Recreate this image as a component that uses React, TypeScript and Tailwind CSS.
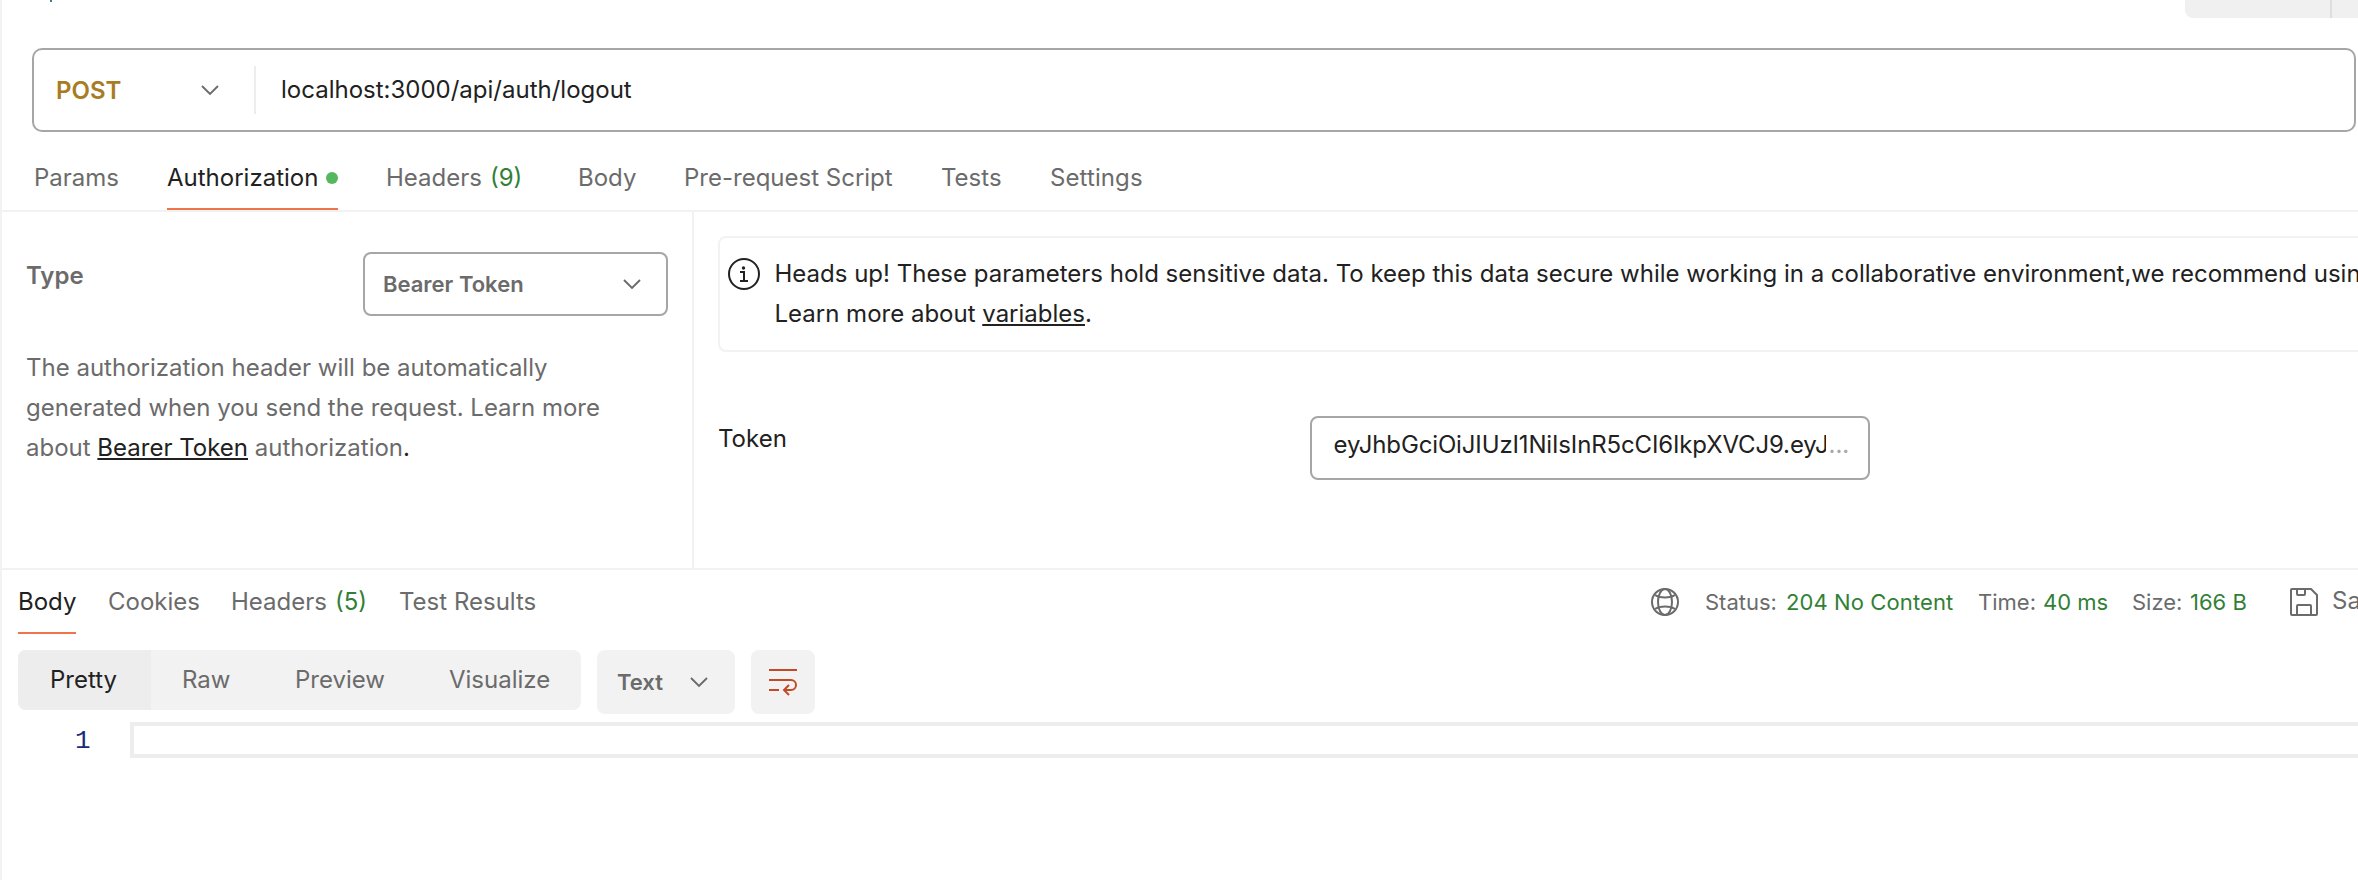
import React from "react";

function Chevron() {
  return (
    <svg width="18" height="12" viewBox="0 0 18 12" fill="none" stroke="#6b6b6b" strokeWidth="1.9" className="shrink-0">
      <path d="M1 2l8 8 8-8" />
    </svg>
  );
}

function InfoIcon() {
  return (
    <svg width="32" height="32" viewBox="0 0 32 32" fill="none" stroke="#212121" strokeWidth="2" className="shrink-0">
      <circle cx="16" cy="16" r="15" />
      <path d="M12 14h4v9M12 23h8" />
      <circle cx="15.5" cy="10" r="1.7" fill="#212121" stroke="none" />
    </svg>
  );
}

function GlobeIcon() {
  return (
    <svg width="28" height="28" viewBox="0 0 28 28" fill="none" stroke="#6b6b6b" strokeWidth="2" className="shrink-0">
      <circle cx="14" cy="14" r="13" />
      <ellipse cx="14" cy="14" rx="7" ry="13" />
      <path d="M4 7c5 3.4 15 3.4 20 0M4 21c5-3.4 15-3.4 20 0" />
    </svg>
  );
}

function SaveIcon() {
  return (
    <svg width="28" height="28" viewBox="0 0 28 28" fill="none" stroke="#6b6b6b" strokeWidth="2" strokeLinejoin="round" className="shrink-0">
      <path d="M2 1h19l6 6v19a1 1 0 0 1-1 1H2a1 1 0 0 1-1-1V2a1 1 0 0 1 1-1z" />
      <path d="M7 1v5a1 1 0 0 0 1 1h6a1 1 0 0 0 1-1V1M7 27v-9a1 1 0 0 1 1-1h12a1 1 0 0 1 1 1v9" />
    </svg>
  );
}

function WrapIcon() {
  return (
    <svg width="28" height="28" viewBox="0 0 28 28" fill="none" stroke="#c34a26" strokeWidth="2">
      <path d="M0 2h28M0 12h22a5 5 0 0 1 0 10h-7M0 22h10M20 17l-5 5 5 5" />
    </svg>
  );
}

function RequestTabs() {
  return (
    <nav className="flex h-20 shrink-0 gap-12 border-b-2 border-[#f2f2f2] pl-8 text-[#6b6b6b]">
      <span className="w-[85px] pt-[26px]">Params</span>
      <span className="flex h-[78px] w-[171px] items-start border-b-2 border-[#f0744a] pt-[26px] text-[#212121]">
        Authorization
        <i className="mt-3.5 ml-auto size-3 shrink-0 rounded-full bg-[#55b85e]" />
      </span>
      <span className="flex w-[144px] pt-[26px]">
        Headers <b className="ml-2 font-normal text-[#327f36]">(9)</b>
      </span>
      <span className="w-[58px] pt-[26px]">Body</span>
      <span className="w-[209px] pt-[26px]">Pre-request Script</span>
      <span className="w-[61px] pt-[26px]">Tests</span>
      <span className="pt-[26px] tracking-[0.1px]">Settings</span>
    </nav>
  );
}

function AuthPanel() {
  return (
    <section className="w-[692px] shrink-0 border-r-2 border-[#f2f2f2] pl-6 text-[#6b6b6b]">
      <div className="flex pt-10">
        <span className="w-[337px] pt-[4px] font-semibold">Type</span>
        <div className="flex h-16 w-[305px] items-center justify-between rounded-lg border-2 border-[#a6a6a6] pr-[25px] pl-[18px] text-[22px] font-semibold">
          Bearer Token
          <Chevron />
        </div>
      </div>
      <p className="mt-8 whitespace-pre">
        The authorization header will be automatically{"\n"}generated when you send the request. Learn more{"\n"}about{" "}
        <a className="text-[#212121] underline decoration-2 underline-offset-2">Bearer Token</a> authorization
        <span className="text-[#212121]">.</span>
      </p>
    </section>
  );
}

function TokenPanel() {
  return (
    <section className="flex-1 overflow-hidden pl-6">
      <div className="mt-6 flex h-[116px] w-[1700px] rounded-lg border-2 border-[#f2f2f2] pt-4 pl-2">
        <div className="pt-1">
          <InfoIcon />
        </div>
        <p className="ml-[14.5px] whitespace-pre">
          Heads up! These parameters hold sensitive data. To keep this data secure while working in a collaborative environment,we recommend using
          {"\n"}Learn more about <a className="underline decoration-2 underline-offset-2">variables</a>.
        </p>
      </div>
      <div className="mt-16 flex">
        <span className="w-[592px] pt-[3px]">Token</span>
        <div className="flex h-16 w-[560px] rounded-lg border-2 border-[#a6a6a6] pt-[7px] pl-[21.5px]">
          <span className="w-[492px] overflow-hidden tracking-[-0.14px] whitespace-nowrap">eyJhbGciOiJIUzI1NiIsInR5cCI6IkpXVCJ9.eyJ1c2Vy</span>
          <span className="ml-[3px] text-[#a6a6a6]">...</span>
        </div>
      </div>
    </section>
  );
}

function ResponseHeader() {
  return (
    <div className="flex h-16 shrink-0 pl-4 text-[#6b6b6b]">
      <span className="w-[58px] border-b-2 border-[#f0744a] pt-3 text-[#212121]">Body</span>
      <span className="ml-8 w-[91px] pt-3">Cookies</span>
      <span className="ml-8 flex w-[136px] pt-3">
        Headers <b className="ml-2 font-normal text-[#327f36]">(5)</b>
      </span>
      <span className="ml-8 pt-3">Test Results</span>
      <div className="ml-auto flex w-[707px] items-start overflow-hidden pt-3 text-[22px] whitespace-nowrap">
        <div className="w-[54px] shrink-0 pt-1.5">
          <GlobeIcon />
        </div>
        <span className="w-[81px] shrink-0">Status:</span>
        <span className="w-[192px] shrink-0 tracking-[0.1px] text-[#327f36]">204 No Content</span>
        <span className="w-[65px] shrink-0">Time:</span>
        <span className="w-[89px] shrink-0 text-[#327f36]">40 ms</span>
        <span className="w-[58px] shrink-0">Size:</span>
        <span className="w-[100px] shrink-0 text-[#327f36]">166 B</span>
        <div className="w-[42px] shrink-0 pt-1.5">
          <SaveIcon />
        </div>
        <span className="-mt-px text-2xl leading-10">Save Response</span>
      </div>
    </div>
  );
}

function ViewToolbar() {
  return (
    <div className="mt-4 flex h-16 shrink-0 items-start pl-4 text-[#6b6b6b]">
      <div className="flex h-[60px] w-[563px] overflow-hidden rounded-lg bg-[#f2f2f2] leading-[60px]">
        <span className="w-[133px] bg-[#ededed] pl-8 text-[#212121]">Pretty</span>
        <span className="w-[111px] pl-[31px]">Raw</span>
        <span className="w-[155px] pl-[33px]">Preview</span>
        <span className="pl-8">Visualize</span>
      </div>
      <div className="ml-4 flex h-16 w-[138px] items-center justify-between rounded-lg bg-[#f2f2f2] pr-[27px] pl-5 text-[22px] font-semibold">
        Text
        <Chevron />
      </div>
      <div className="ml-4 flex size-16 items-center justify-center rounded-lg bg-[#f2f2f2]">
        <WrapIcon />
      </div>
    </div>
  );
}

export default function App() {
  return (
    <div className="flex h-[880px] w-full flex-col overflow-hidden border-l-2 border-[#f2f2f2] bg-white font-['Inter',sans-serif] text-2xl leading-10 text-[#212121]">
      <div className="flex h-12 shrink-0 items-start justify-between pl-12">
        <i className="h-[2px] w-[2px] bg-[#3b7f86]" />
        <div className="flex h-[18px] w-[173px] rounded-bl-lg bg-[#f0f0f0]">
          <div className="ml-[145px] w-0.5 bg-[#dedede]" />
        </div>
      </div>
      <div className="mr-0.5 ml-[30px] flex h-[84px] shrink-0 items-center rounded-[10px] border-2 border-[#a6a6a6]">
        <span className="w-[145px] pt-px pl-[22px] font-semibold text-[#a87c23]">POST</span>
        <div className="flex h-12 w-[77px] items-center border-r-2 border-[#ededed] pl-[22px]">
          <Chevron />
        </div>
        <span className="pl-[25px]">localhost:3000/api/auth/logout</span>
      </div>
      <RequestTabs />
      <main className="flex h-[358px] shrink-0 border-b-2 border-[#f2f2f2]">
        <AuthPanel />
        <TokenPanel />
      </main>
      <ResponseHeader />
      <ViewToolbar />
      <div className="mt-2 flex h-9 shrink-0">
        <span className="w-[128px] pl-[73px] font-['Liberation_Mono',monospace] text-[26px] leading-[38px] text-[#1b2a7b]">1</span>
        <div className="flex-1 border-4 border-r-0 border-[#ededed]" />
      </div>
    </div>
  );
}
